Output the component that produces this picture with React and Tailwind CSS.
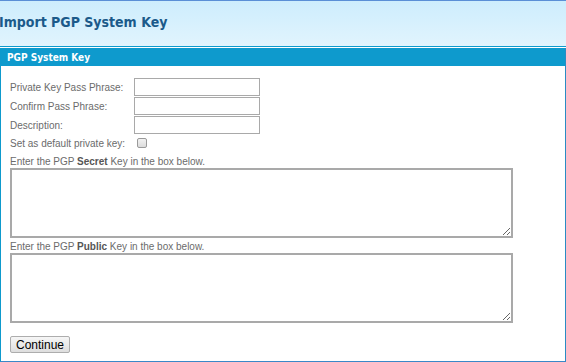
import React from "react";

const Field = ({ label }) => (
  <div className="flex items-center h-[18px]">
    <span className="w-[124px] shrink-0 whitespace-nowrap">{label}</span>
    <input
      type="text"
      className="w-[126px] h-[18px] border border-[#a9a9a9] bg-white outline-none"
    />
  </div>
);

const App = () => {
  return (
    <div className="w-[566px] h-[362px] bg-white overflow-hidden font-['Liberation_Sans',Arial,sans-serif]">
      <div className="h-[46px] border-t border-[#5a8fd6] bg-gradient-to-b from-[#cdedfd] to-[#e1f4fd] flex items-center">
        <h1 className="ml-[-1px] mt-[-3px] text-[14px] font-bold text-[#1b5a8a] font-['DejaVu_Sans_Condensed','DejaVu_Sans',sans-serif] whitespace-nowrap">
          Import PGP System Key
        </h1>
      </div>
      <div className="h-[1px] bg-[#0e9acd]" />
      <div className="h-[1px] bg-white" />

      <div className="h-[314px] border-l border-r border-b border-l-[#0e9acd] border-r-[#2a8cc4] border-b-[#3a88c8] flex flex-col">
        <div className="h-[18px] bg-[#0e9acd] px-[6px] flex items-center text-white text-[10px] font-bold font-['DejaVu_Sans_Condensed','DejaVu_Sans',sans-serif] whitespace-nowrap">
          PGP System Key
        </div>

        <div className="pl-[9px] pt-[12px] text-[10px] text-[#6b6b6b] flex flex-col">
          <div className="flex flex-col gap-[1px]">
            <Field label="Private Key Pass Phrase:" />
            <Field label="Confirm Pass Phrase:" />
            <Field label="Description:" />
          </div>

          <div className="flex items-center h-[14px] mt-[2px]">
            <span className="w-[127px] shrink-0 whitespace-nowrap">Set as default private key:</span>
            <input
              type="checkbox"
              className="appearance-none w-[10px] h-[10px] border border-[#9a9a9a] rounded-[2px] bg-gradient-to-b from-[#f2f2f2] to-[#dcdcdc]"
            />
          </div>

          <div className="h-[14px] mt-[4px] flex items-center whitespace-nowrap">
            <span>
              Enter the PGP <b className="text-[#555]">Secret</b> Key in the box below.
            </span>
          </div>
          <textarea className="w-[503px] h-[70px] border-2 border-[#a9a9a9] bg-white outline-none" />

          <div className="h-[14px] mt-[1px] flex items-center whitespace-nowrap">
            <span>
              Enter the PGP <b className="text-[#555]">Public</b> Key in the box below.
            </span>
          </div>
          <textarea className="w-[503px] h-[70px] border-2 border-[#a9a9a9] bg-white outline-none" />

          <div className="mt-[13px]">
            <button className="h-[17px] px-[5px] border border-[#adadad] rounded-[2px] bg-gradient-to-b from-[#f6f6f6] to-[#dedede] text-black text-[12px] leading-none font-['Liberation_Sans',Arial,sans-serif]">
              Continue
            </button>
          </div>
        </div>
      </div>
    </div>
  );
};

export default App;
